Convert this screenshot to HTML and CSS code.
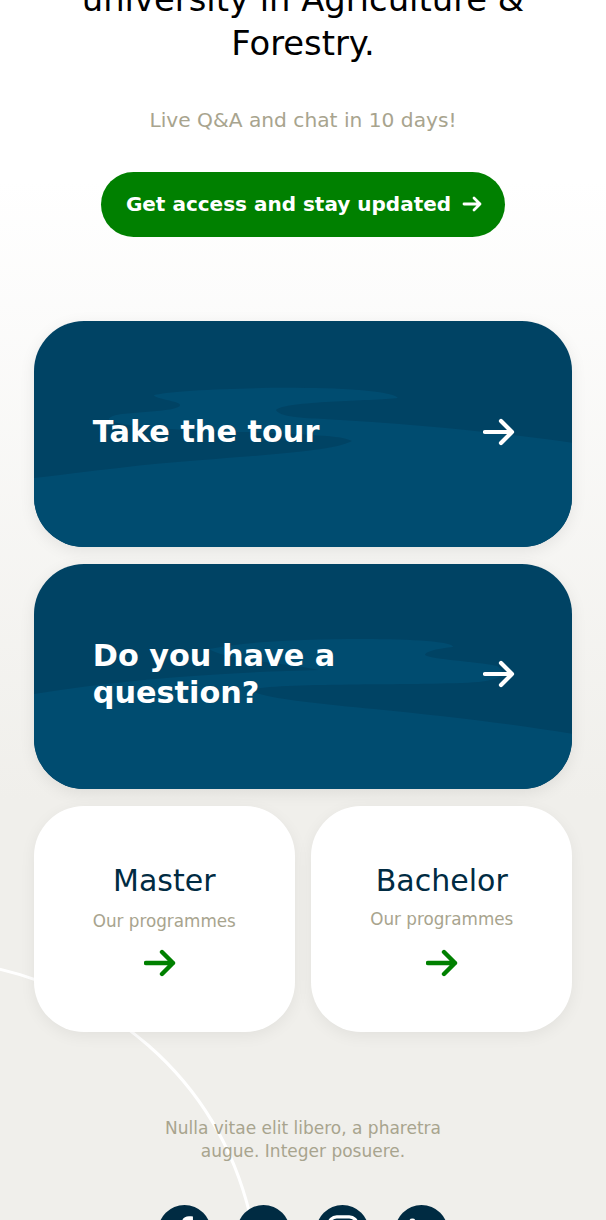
FILE: index.html
```html
<!DOCTYPE html>
<html lang="en">
<head>
  <meta charset="UTF-8">
  <meta name="viewport" content="width=device-width, initial-scale=1.0">
  <title>Open day</title>
  <link rel="stylesheet" href="styles.css">
</head>
<body>
  <svg class="arc" width="606" height="1220" viewBox="0 0 606 1220" fill="none">
    <path d="M-10 967 C 100 990 215 1070 250 1215" stroke="#fff" stroke-width="3"/>
  </svg>

  <div class="page">
    <h1 class="headline">university in Agriculture &amp; Forestry.</h1>
    <p class="countdown">Live Q&amp;A and chat in 10 days!</p>
    <a class="access" href="#">
      Get access and stay updated
      <svg class="arrow-sm" width="20" height="16" viewBox="0 0 20 16" fill="none" stroke="#fff" stroke-width="2.8" stroke-linecap="round" stroke-linejoin="round"><path d="M2 8h16M12 2l6 6-6 6"/></svg>
    </a>

    <div class="cards">
      <a class="card-blue" href="#">
        <svg class="wave" width="539" height="226" viewBox="0 0 539 226">
          <path fill="#004c70" d="M0 157 C 60 150 110 143 168 139 C 230 134 300 130 318 120 C 310 116 295 115 277 114 C 250 112 225 111 204 111 C 150 110 60 104 77 96 C 85 90 145 92 146 84 C 146 80 120 78 120 74 C 150 66 350 62 364 77 C 340 80 250 80 242 89 C 245 96 270 97 290 98 C 380 103 470 112 539 122 L539 226 L0 226 Z"/>
        </svg>
        <span class="card-title">Take the tour</span>
        <svg class="arrow-lg" width="32" height="28" viewBox="0 0 32 28" fill="none" stroke="#fff" stroke-width="4.2" stroke-linecap="round" stroke-linejoin="round"><path d="M2 14h27M18 3l11 11-11 11"/></svg>
      </a>

      <a class="card-blue" href="#">
        <svg class="wave" width="539" height="226" viewBox="0 0 539 226">
          <path fill="#004c70" d="M0 130 C 90 115 200 108 285 106 C 260 100 190 96 175 85 C 210 78 260 75 330 75 C 380 75 420 78 419 83 C 400 85 391 88 391 91 C 400 96 440 97 463 102 C 475 110 465 116 445 118 C 390 122 240 118 217 126 C 225 134 290 140 340 145 C 410 152 480 160 539 170 L539 226 L0 226 Z"/>
        </svg>
        <span class="card-title">Do you have a question?</span>
        <svg class="arrow-lg" width="32" height="28" viewBox="0 0 32 28" fill="none" stroke="#fff" stroke-width="4.2" stroke-linecap="round" stroke-linejoin="round"><path d="M2 14h27M18 3l11 11-11 11"/></svg>
      </a>

      <div class="card-row">
        <a class="card-white card-master" href="#">
          <span class="white-title">Master</span>
          <span class="white-sub">Our programmes</span>
          <svg class="arrow-green" width="32" height="28" viewBox="0 0 32 28" fill="none" stroke="#008000" stroke-width="4.4" stroke-linecap="round" stroke-linejoin="round"><path d="M2 14h27M18 3l11 11-11 11"/></svg>
        </a>
        <a class="card-white card-bachelor" href="#">
          <span class="white-title">Bachelor</span>
          <span class="white-sub">Our programmes</span>
          <svg class="arrow-green" width="32" height="28" viewBox="0 0 32 28" fill="none" stroke="#008000" stroke-width="4.4" stroke-linecap="round" stroke-linejoin="round"><path d="M2 14h27M18 3l11 11-11 11"/></svg>
        </a>
      </div>
    </div>

    <p class="footer-text">Nulla vitae elit libero, a pharetra augue. Integer posuere.</p>

    <div class="social">
      <a class="social-icon" href="#"><svg width="34" height="34" viewBox="0 0 30 30" fill="#fff"><path d="M17 30V17h4l1-5h-5V9c0-1.500.7-2.500 2.500-2.500H22V2.200C21 2 19.800 2 18.500 2 14.800 2 12 4.300 12 8.500V12H8v5h4v13z"/></svg></a>
      <a class="social-icon" href="#"><svg width="34" height="34" viewBox="0 0 30 30" fill="#fff"><path d="M26 8c-1 .5-2 .7-3 .8 1-.6 2-1.600 2.300-2.800-1 .6-2.100 1-3.300 1.300A5 5 0 0 0 13.500 12C9.500 11.800 6 9.800 3.600 6.800c-1.300 2.300-.6 5.200 1.500 6.700-.8 0-1.600-.2-2.300-.6 0 2.400 1.700 4.500 4 5-.7.200-1.500.2-2.200.1.600 2 2.500 3.400 4.600 3.500A10 10 0 0 1 2 23.500 14 14 0 0 0 23.700 11c1-.7 1.700-1.800 2.300-3z"/></svg></a>
      <a class="social-icon" href="#"><svg width="34" height="34" viewBox="0 0 30 30" fill="none" stroke="#fff" stroke-width="2.800"><rect x="2.500" y="2.500" width="25" height="25" rx="7"/><circle cx="15" cy="15" r="6"/></svg></a>
      <a class="social-icon" href="#"><svg width="34" height="34" viewBox="0 0 30 30" fill="#fff"><path d="M4 11h5v15H4zM6.500 4a2.800 2.800 0 1 1 0 5.600 2.800 2.800 0 0 1 0-5.600zM12 11h4.800v2c.8-1.400 2.500-2.400 4.700-2.400 4.300 0 5.500 2.800 5.500 6.800V26h-5v-7.800c0-2-.5-3.400-2.300-3.400-2 0-2.700 1.500-2.700 3.400V26h-5z"/></svg></a>
    </div>
  </div>
</body>
</html>
```
FILE: styles.css
```css
* {
  box-sizing: border-box;
}

html, body {
  margin: 0;
  height: 1220px;
  overflow: hidden;
}

body {
  position: relative;
  font-family: "DejaVu Sans", sans-serif;
  background: linear-gradient(to bottom, #fff 0, #fff 180px, #f0efeb 800px, #f0efeb 100%);
}

a {
  text-decoration: none;
}

.arc {
  position: absolute;
  left: 0;
  top: 0;
}

.page {
  position: relative;
  display: flex;
  flex-direction: column;
  align-items: center;
}

.headline {
  width: 480px;
  margin: -22px 0 0;
  font-size: 33.800px;
  font-weight: 400;
  line-height: 44px;
  text-align: center;
  color: #000;
}

.countdown {
  margin: 37px 0 0;
  font-size: 20.200px;
  line-height: 34px;
  color: #a8a48e;
}

.access {
  display: flex;
  align-items: center;
  gap: 11px;
  height: 65px;
  margin-top: 35px;
  padding: 0 23px 2px 25px;
  border-radius: 33px;
  background: #008000;
  color: #fff;
  font-size: 20px;
  font-weight: 700;
}

.cards {
  display: flex;
  flex-direction: column;
  gap: 17px;
  width: 538.500px;
  margin-top: 84px;
}

.card-blue {
  position: relative;
  display: flex;
  align-items: center;
  justify-content: space-between;
  height: 225.500px;
  padding: 0 57.500px 4px 59px;
  border-radius: 50px;
  overflow: hidden;
  background: #004364;
  box-shadow: 0 4px 16px rgba(0, 0, 0, .08);
}

.wave {
  position: absolute;
  left: 0;
  top: 0;
}

.card-title {
  position: relative;
  width: 300px;
  font-size: 30.300px;
  font-weight: 700;
  line-height: 37px;
  color: #fff;
}

.arrow-lg {
  position: relative;
}

.card-row {
  display: flex;
  gap: 16.500px;
}

.card-white {
  display: flex;
  flex: 1;
  flex-direction: column;
  align-items: center;
  height: 225.500px;
  padding-top: 54px;
  border-radius: 50px;
  background: #fff;
  box-shadow: 0 4px 16px rgba(0, 0, 0, .06);
}

.white-title {
  font-size: 30px;
  line-height: 42px;
  color: #002b42;
}

.white-sub {
  margin-top: 7px;
  font-size: 16.800px;
  line-height: 24px;
  color: #a8a48e;
}

.arrow-green {
  margin-top: 16px;
}

.card-master .arrow-green {
  margin-right: 8px;
}

.card-bachelor .white-sub {
  margin-top: 5px;
}

.card-bachelor .arrow-green {
  margin-top: 18px;
}

.footer-text {
  width: 300px;
  margin: 85px 0 0;
  font-size: 17px;
  line-height: 23px;
  text-align: center;
  color: #a8a48e;
}

.social {
  display: flex;
  gap: 26px;
  margin-top: 42px;
}

.social-icon {
  display: flex;
  align-items: center;
  justify-content: center;
  width: 53px;
  height: 53px;
  border-radius: 50%;
  background: #002b42;
}
```
